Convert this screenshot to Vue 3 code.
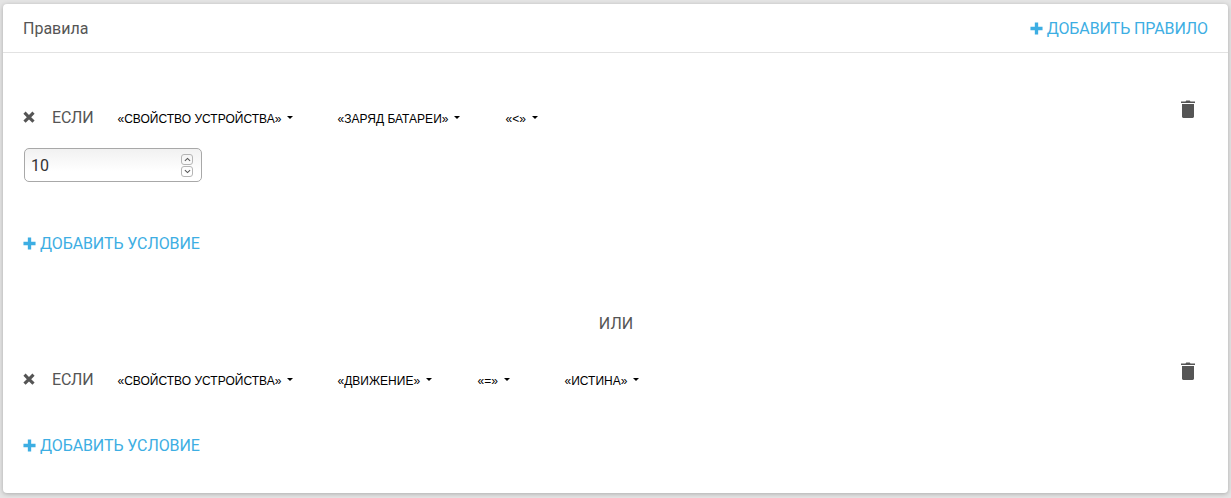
<template>
  <div class="page">
    <section class="card">
      <header class="card__head">
        <span class="card__title">Правила</span>
        <a class="add add--rule"><svg class="plus" viewBox="0 0 14 14"><path d="M5.2 0.5h3.6v4.7h4.7v3.6H8.8v4.7H5.2V8.8H0.5V5.2h4.7z" /></svg>ДОБАВИТЬ ПРАВИЛО</a>
      </header>
      <div class="rules">
        <template v-for="(rule, i) in rules" :key="i">
          <div v-if="i > 0" class="or">ИЛИ</div>
          <div class="rule" :class="{ 'rule--first': i === 0 }">
            <div class="rule__main">
              <div class="cond">
                <svg class="cross" viewBox="0 0 12 12"><path d="M2.6 0.6 6 4 9.4 0.6 11.6 2.8 8.2 6.2 11.6 9.6 9.4 11.8 6 8.4 2.6 11.8 0.4 9.6 3.8 6.2 0.4 2.8z" /></svg>
                <span class="cond__if">ЕСЛИ</span>
                <span
                  v-for="opt in rule.options"
                  :key="opt.label"
                  class="drop"
                  :style="{ width: opt.width + 'px' }"
                >{{ opt.label }}<i class="caret"></i></span>
              </div>
              <div v-if="rule.value" class="num">
                <span>{{ rule.value }}</span>
                <div class="num__spin">
                  <span class="num__btn"><svg viewBox="0 0 8 5"><path d="M1 4 4 1.2 7 4" /></svg></span>
                  <span class="num__btn"><svg viewBox="0 0 8 5"><path d="M1 1 4 3.8 7 1" /></svg></span>
                </div>
              </div>
              <a class="add add--cond"><svg class="plus" viewBox="0 0 14 14"><path d="M5.2 0.5h3.6v4.7h4.7v3.6H8.8v4.7H5.2V8.8H0.5V5.2h4.7z" /></svg>ДОБАВИТЬ УСЛОВИЕ</a>
            </div>
            <svg class="trash" viewBox="0 0 14 18"><path d="M4.5 1.6 5.3.4h3.4l.8 1.2H14v1.400H0V1.600zM1 4h12v12.600c0 .8-.6 1.400-1.400 1.400H2.400C1.600 18 1 17.400 1 16.600z" /></svg>
          </div>
        </template>
      </div>
    </section>
  </div>
</template>

<script setup>
const rules = [
  {
    value: "10",
    options: [
      { label: "«СВОЙСТВО УСТРОЙСТВА»", width: 220 },
      { label: "«ЗАРЯД БАТАРЕИ»", width: 168 },
      { label: "«<»", width: 60 },
    ],
  },
  {
    value: "",
    options: [
      { label: "«СВОЙСТВО УСТРОЙСТВА»", width: 220 },
      { label: "«ДВИЖЕНИЕ»", width: 140 },
      { label: "«=»", width: 87 },
      { label: "«ИСТИНА»", width: 90 },
    ],
  },
];
</script>

<style>
html,
body {
  background: #e4e4e4;
}
</style>

<style scoped>
.page {
  width: 1231px;
  height: 498px;
  padding: 4px 3px 5px;
  box-sizing: border-box;
  overflow: hidden;
  font-family: Roboto, "Liberation Sans", sans-serif;
}

.card {
  height: 489px;
  background: #fff;
  border-radius: 4px;
  box-shadow: 0 1px 4px rgba(0, 0, 0, 0.25);
  color: #555;
}

.card__head {
  height: 48px;
  padding: 0 20px;
  display: flex;
  align-items: center;
  justify-content: space-between;
  border-bottom: 1px solid #e2e2e2;
}

.card__title {
  font-size: 16px;
}

.add {
  display: flex;
  align-items: center;
  gap: 4px;
  color: #3daee3;
  font-size: 16px;
  letter-spacing: -0.1px;
}

.plus {
  width: 13px;
  height: 13px;
  fill: #3daee3;
}

.rules {
  padding: 0 33px 0 20px;
}

.rule {
  display: flex;
  justify-content: space-between;
  align-items: flex-start;
}

.rule--first {
  padding-top: 50px;
  height: 199px;
}

.rule__main {
  flex: 1;
}

.or {
  height: 63px;
  padding: 12px 0 0 14px;
  box-sizing: border-box;
  text-align: center;
  font-size: 16px;
}

.cond {
  height: 28px;
  display: flex;
  align-items: center;
}

.cross {
  width: 12px;
  height: 12px;
  fill: #555;
  margin-right: 17px;
}

.cond__if {
  font-size: 16px;
  letter-spacing: -0.2px;
  margin-right: 24px;
}

.drop {
  display: flex;
  align-items: center;
  padding-top: 4px;
  font-family: "Liberation Sans", Arial, sans-serif;
  font-size: 12px;
  letter-spacing: 0.02px;
  color: #000;
}

.caret {
  width: 0;
  height: 0;
  margin: 0 0 3px 6px;
  border-top: 3px solid #000;
  border-left: 3.5px solid transparent;
  border-right: 3.5px solid transparent;
}

.num {
  width: 178px;
  height: 34px;
  margin: 17px 0 0 1px;
  padding: 0 8px 0 6px;
  box-sizing: border-box;
  display: flex;
  align-items: center;
  justify-content: space-between;
  border: 1px solid #a8a8a8;
  border-radius: 5px;
  background: linear-gradient(#f1f1f1, #fff 70%);
  color: #333;
  font-size: 16px;
}

.num__spin {
  display: flex;
  flex-direction: column;
  gap: 1px;
}

.num__btn {
  width: 12px;
  height: 11px;
  display: flex;
  align-items: center;
  justify-content: center;
  border: 1px solid #b5b5b5;
  border-radius: 3px;
  box-sizing: border-box;
}

.num__btn svg {
  width: 7px;
  height: 5px;
  fill: none;
  stroke: #555;
  stroke-width: 1.2;
}

.add--cond {
  margin-top: 43px;
}

.rule--first .add--cond {
  margin-top: 52px;
}

.trash {
  width: 14px;
  height: 18px;
  margin-top: -3px;
  fill: #555;
}
</style>
